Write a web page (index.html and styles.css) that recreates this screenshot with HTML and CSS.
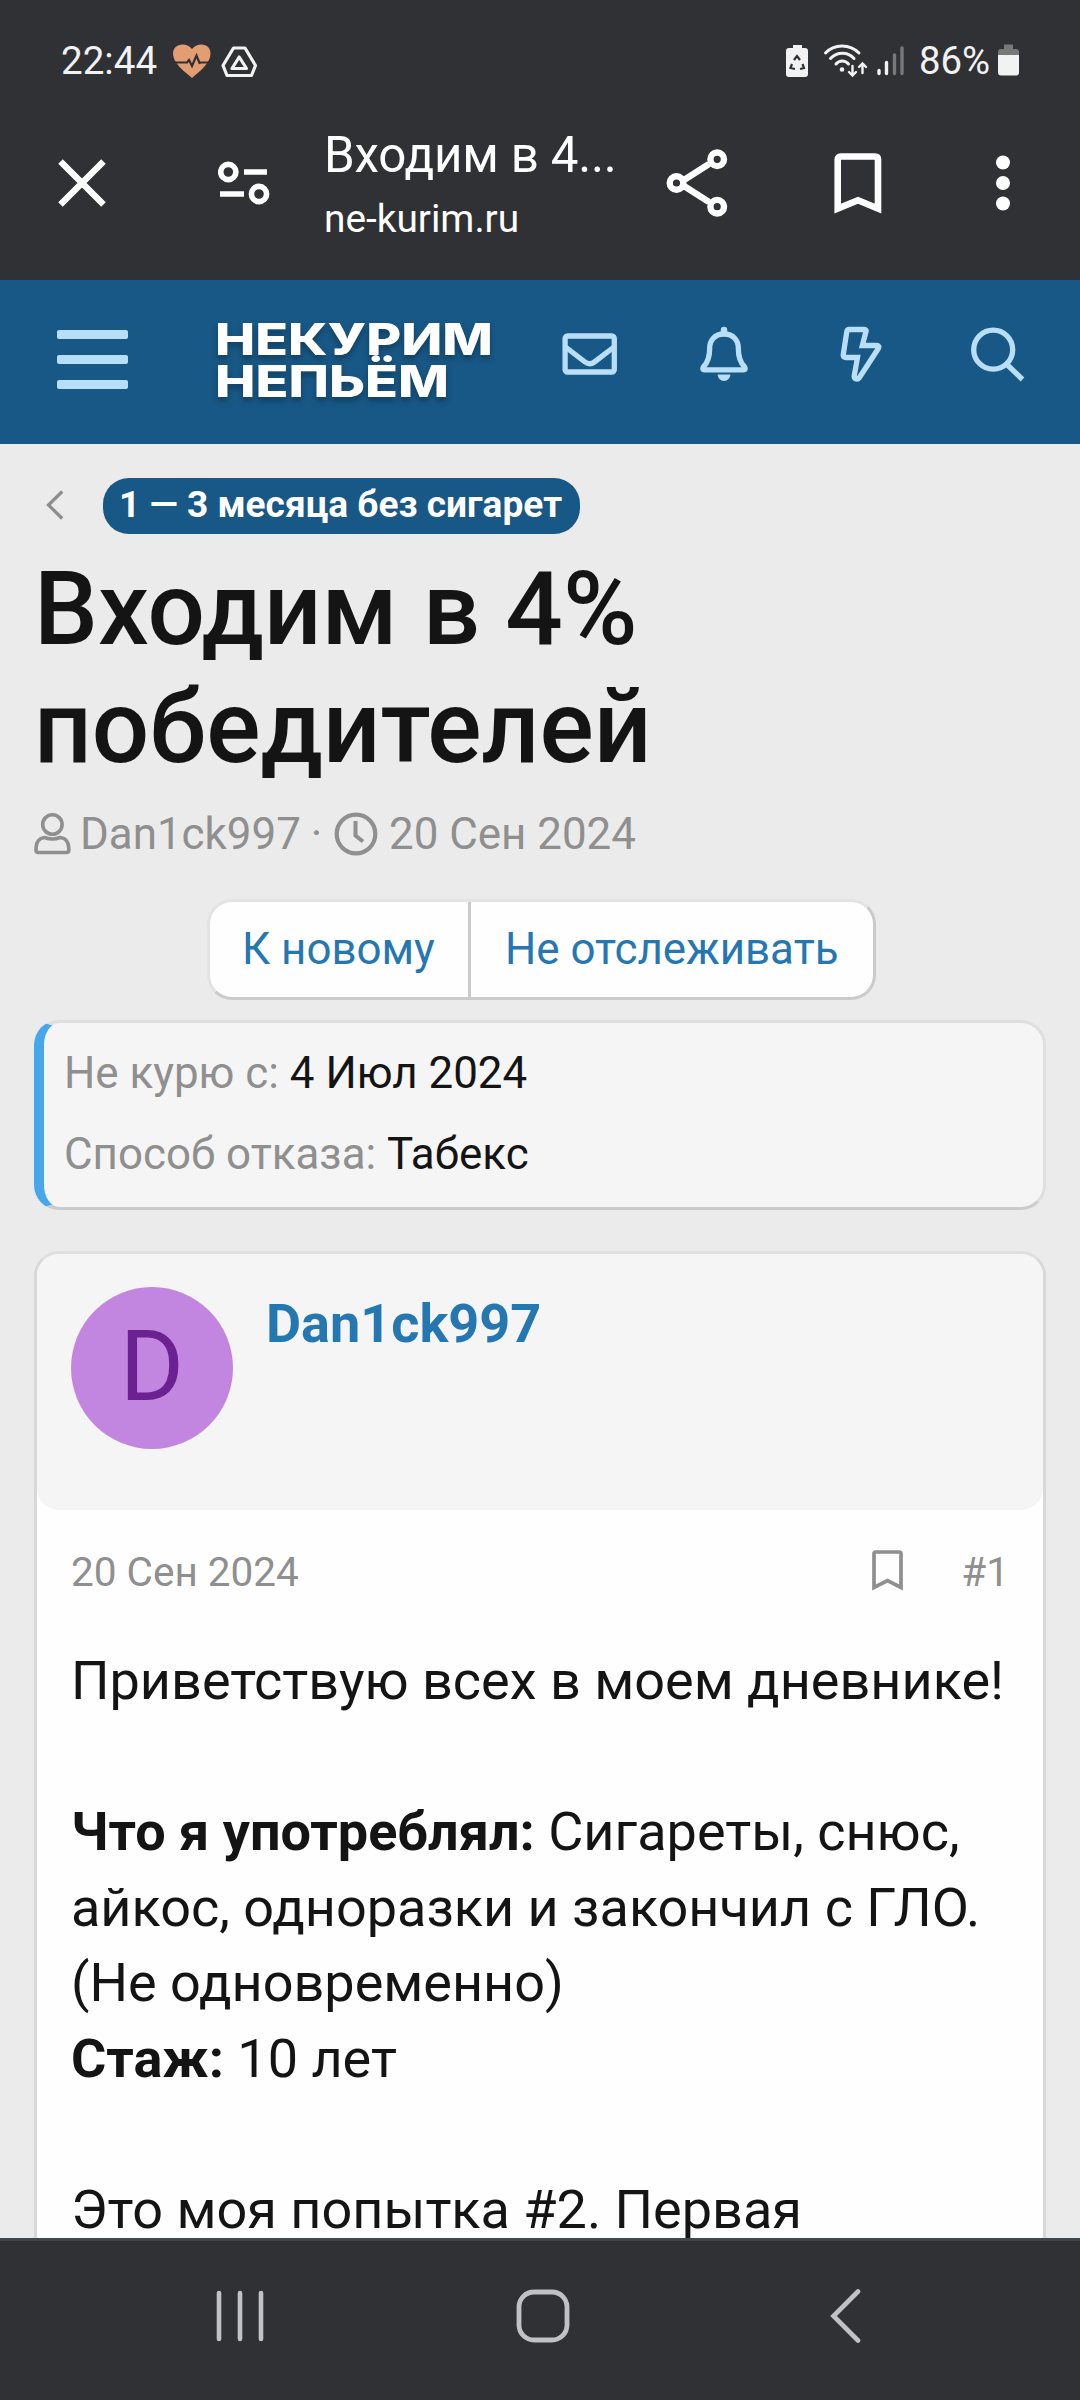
FILE: index.html
```html
<!DOCTYPE html>
<html lang="ru">
<head>
<meta charset="utf-8">
<title>Входим в 4% победителей</title>
<link rel="stylesheet" href="styles.css">
</head>
<body>
<div class="screen">
  <div class="status">
    <span class="time">22:44</span>
    <svg class="status-left" width="86" height="40" viewBox="0 0 86 40">
      <path d="M20 37C13 31 1 22 1 13C1 7 5 3.500 10.500 3.500C14.500 3.500 18 5.500 20 8C22 5.500 25.500 3.500 29.500 3.500C35 3.500 38.500 7 38.500 13C38.500 22 27 31 20 37Z" fill="#e29d73"/>
      <path d="M3 21.500H15L17 19L20 25L24.500 14.500L27.500 22L29 21.500H37" fill="none" stroke="#303134" stroke-width="2.200"/>
      <path d="M61.500 7H73L83.500 24.500L79.500 34.500H55L51 24.500Z" fill="none" stroke="#f2f2f2" stroke-width="3.200" stroke-linejoin="round"/>
      <path d="M67.200 16L74.500 27.500H60Z" fill="none" stroke="#f2f2f2" stroke-width="3.200" stroke-linejoin="round"/>
    </svg>
    <svg class="status-mid" width="126" height="40" viewBox="784 41 126 40">
      <path d="M793 45H802V48H805Q808 48 808 51V74Q808 77 805 77H789Q786 77 786 74V51Q786 48 789 48H793Z" fill="#f2f2f2"/>
      <path d="M794 60L797 56L800 60M802.500 64L804 68L800 69M795 69L790.500 68L792 64" fill="none" stroke="#303134" stroke-width="2.200"/>
      <g fill="none" stroke="#f2f2f2" stroke-width="3" stroke-linecap="round">
        <path d="M825.500 53C834 43.500 850 43.500 859 53"/>
        <path d="M830.500 58.500C837 51.500 848 51.500 854 58.500"/>
        <path d="M836 64C839.500 60 845 60 848.500 64"/>
        <path d="M852.500 66V75M849 72L852.500 75.500L856 72M862.500 73V63.500M859 67L862.500 63.500L866 67" stroke-width="2.400"/>
      </g>
      <circle cx="842" cy="69.500" r="2.300" fill="#f2f2f2"/>
      <g stroke-width="3.400" stroke-linecap="round">
        <path d="M879 70.500V73.500M886.500 62.500V73.500" stroke="#f2f2f2"/>
        <path d="M894.500 55V73.500M902 48V73.500" stroke="#77787a"/>
      </g>
    </svg>
    <span class="percent">86%</span>
    <svg class="battery" width="21" height="40" viewBox="0 0 21 40">
      <path d="M6 3.500H15V8H18Q21 8 21 11V15H0V11Q0 8 3 8H6Z" fill="#77787a"/>
      <path d="M0 14H21V31.500Q21 34.500 18 34.500H3Q0 34.500 0 31.500Z" fill="#f2f2f2"/>
    </svg>
  </div>

  <div class="toolbar">
    <svg width="48" height="48" viewBox="0 0 48 48"><path d="M2.500 2.500L45.500 45.500M45.500 2.500L2.500 45.500" stroke="#fff" stroke-width="6.400"/></svg>
    <svg width="52" height="44" viewBox="0 0 52 44"><g fill="none" stroke="#fff" stroke-width="5.600"><circle cx="10.300" cy="11" r="7.600"/><path d="M26 11H49M2 33H26"/><circle cx="41" cy="33" r="7.600"/></g></svg>
    <div class="page-info"><div class="page-title">Входим в 4...</div><div class="page-url">ne-kurim.ru</div></div>
    <svg width="62" height="68" viewBox="0 0 62 68"><g fill="none" stroke="#fff" stroke-width="6.400"><path d="M18 31L43 15M18 37L43 53"/><circle cx="10.500" cy="34" r="6.800"/><circle cx="51.200" cy="10.300" r="6.800"/><circle cx="51.200" cy="57.700" r="6.800"/></g></svg>
    <svg width="48" height="61" viewBox="0 0 48 61"><path d="M3.700 55.500V6.500Q3.700 3.500 6.700 3.500H41Q44 3.500 44 6.500V55.500L24 47.200Z" fill="none" stroke="#fff" stroke-width="6.600"/></svg>
    <svg width="16" height="56" viewBox="0 0 16 56"><g fill="#fff"><circle cx="8" cy="7.500" r="7"/><circle cx="8" cy="28" r="7"/><circle cx="8" cy="48.500" r="7"/></g></svg>
  </div>

  <header class="site-header">
    <div class="burger"><i></i><i></i><i></i></div>
    <svg class="logo" width="290" height="96" viewBox="0 0 290 96">
      <text x="-2" y="42.600" textLength="278" lengthAdjust="spacingAndGlyphs">НЕКУРИМ</text>
      <text x="-2" y="85" textLength="234" lengthAdjust="spacingAndGlyphs">НЕПЬЁМ</text>
    </svg>
    <svg width="56" height="56" viewBox="0 0 56 56"><g class="line"><rect x="3.100" y="10" width="49.200" height="36" rx="2.500"/><path d="M3.500 21L23 36Q27.700 39.500 32.400 36L52 21"/></g></svg>
    <svg width="48" height="56" viewBox="0 0 48 56"><g class="line"><path d="M24 8C14.500 8 9.700 14.500 9.700 22C9.700 32 7.500 37 3.300 41Q2 43.800 4.500 43.800H43.500Q46 43.800 44.700 41C40.500 37 38.300 32 38.300 22C38.300 14.500 33.500 8 24 8Z"/><path d="M24 7V4" stroke-width="6.500" stroke-linecap="round"/></g><path d="M17.500 48.500H30.500Q29.500 55 24 55Q18.500 55 17.500 48.500Z" fill="#b9def7"/></svg>
    <svg width="42" height="56" viewBox="0 0 42 56"><path class="line" d="M9 3.500H24.500Q26.500 3.500 26 5.500L22.300 19.500H36.500Q40 19.500 38.300 22.500L19.500 51.500Q17.500 54 15 52.500Q14 51.500 14.200 50L17.500 31.500H5.500Q2.800 31.500 3.300 28.500L6.800 5.500Q7.300 3.500 9 3.500Z"/></svg>
    <svg width="56" height="56" viewBox="0 0 56 56"><g class="line"><circle cx="23.200" cy="23.700" r="19.500"/><path d="M37.500 39L52.500 53.500"/></g></svg>
  </header>

  <main class="content">
    <nav class="crumbs">
      <svg width="18" height="30" viewBox="0 0 18 30"><path d="M16.200 1.500L2.500 15L16.200 28.500" fill="none" stroke="#8e8e8e" stroke-width="3.300"/></svg>
      <a class="pill">1 — 3 месяца без сигарет</a>
    </nav>
    <h1 class="heading">Входим в 4%<br>победителей</h1>
    <div class="meta">
      <svg width="37" height="44" viewBox="0 0 37 44"><g fill="none" stroke="#8f8f8f" stroke-width="3.600"><circle cx="18.400" cy="12.500" r="9.700"/><path d="M10.500 25.500Q2.300 26.500 2 36V38Q2 40.500 4.500 40.500H32.300Q34.800 40.500 34.800 38V36Q34.500 26.500 26.300 25.500Q18.400 28.500 10.500 25.500Z"/></g></svg>
      <span class="meta-user">Dan1ck997</span>
      <span class="meta-dot">·</span>
      <svg width="44" height="44" viewBox="0 0 44 44"><g fill="none" stroke="#8f8f8f" stroke-width="4.200"><circle cx="22" cy="22" r="19.300"/><path d="M21.500 9V23.500L29 29.500" stroke-width="4"/></g></svg>
      <span class="meta-date">20 Сен 2024</span>
    </div>
    <div class="buttons"><a class="btn btn-new">К новому</a><a class="btn btn-watch">Не отслеживать</a></div>
    <dl class="facts">
      <div><dt>Не курю с:</dt> <dd>4 Июл 2024</dd></div>
      <div><dt>Способ отказа:</dt> <dd>Табекс</dd></div>
    </dl>
    <article class="post">
      <div class="author"><div class="avatar">D</div><a class="author-name">Dan1ck997</a></div>
      <div class="post-bar">
        <span class="post-date">20 Сен 2024</span>
        <svg width="31" height="42" viewBox="0 0 31 42"><path d="M2 37.500V3.800Q2 2 3.800 2H27.200Q29 2 29 3.800V37.500L15.500 30.500Z" fill="none" stroke="#8f8f8f" stroke-width="3.700"/></svg>
        <span class="post-number">#1</span>
      </div>
      <div class="post-body">Приветствую всех в моем дневнике!<br><br><b>Что я употреблял:</b> Сигареты, снюс,<br>айкос, одноразки и закончил с ГЛО.<br>(Не одновременно)<br><b>Стаж:</b> 10 лет<br><br>Это моя попытка #2. Первая</div>
    </article>
  </main>

  <footer class="navbar">
    <svg width="48" height="54" viewBox="0 0 48 54"><path d="M3 4V50M24 4V50M45 4V50" stroke="#c1c2c5" stroke-width="4.600" stroke-linecap="round"/></svg>
    <svg class="home" width="54" height="54" viewBox="0 0 54 54"><rect x="3" y="3" width="48" height="48" rx="15" fill="none" stroke="#c1c2c5" stroke-width="4.800"/></svg>
    <svg width="31" height="54" viewBox="0 0 31 54"><path d="M28 2.500L3.500 27L28 51.500" fill="none" stroke="#c1c2c5" stroke-width="4.600" stroke-linecap="round"/></svg>
  </footer>
</div>
</body>
</html>
```

FILE: styles.css
```css
* { box-sizing: border-box; }
body { margin: 0; font-family: Roboto, "Liberation Sans", sans-serif; color: #141414; }
svg { display: block; flex: none; }
.screen { width: 1080px; height: 2400px; display: flex; flex-direction: column; overflow: hidden; background: #ebebeb; white-space: nowrap; }

.status { height: 120px; flex: none; padding: 41px 61px 0 61px; display: flex; align-items: flex-start; background: #303134; color: #f2f2f2; font-size: 38.6px; line-height: 40px; }
.time { width: 110.5px; }
.status-mid { margin-left: auto; }
.percent { width: 79px; margin-left: 9px; font-size: 38.3px; }

.toolbar { height: 160px; flex: none; padding-bottom: 35px; display: grid; grid-template-columns: 163px 161px 292px 161px 161px 129px; align-items: center; justify-items: center; background: #303134; color: #fff; }
.page-info { align-self: start; justify-self: start; padding: 4px 0 0 0; }
.page-title { font-size: 49.3px; line-height: 62px; letter-spacing: -0.2px; }
.page-url { margin-top: 6px; font-size: 38.8px; line-height: 54px; }

.site-header { height: 164px; flex: none; padding-bottom: 16px; display: grid; grid-template-columns: 185px 337px 135px 134px 140px 134px; align-items: center; justify-items: center; background: #185886; }
.burger { width: 71px; margin-top: 11px; display: flex; flex-direction: column; gap: 16px; }
.burger i { height: 9px; border-radius: 2px; background: #b9def7; }
.logo { justify-self: start; margin: 12px 0 0 32px; overflow: visible; font-family: Inter, sans-serif; font-weight: 800; font-size: 43.5px; fill: #fff; filter: drop-shadow(0 4px 3px rgba(0, 0, 0, .3)); }
.line { fill: none; stroke: #b9def7; stroke-width: 5.3px; }

.content { flex: 1; min-height: 0; overflow: hidden; padding: 34px 34px 0; }
.crumbs { display: flex; align-items: center; padding-left: 12px; }
.crumbs svg { margin-bottom: 3px; }
.pill { width: 477px; height: 56px; margin-left: 39px; padding-left: 16px; border-radius: 26px; background: #185886; color: #fff; font-weight: 700; font-size: 37.1px; line-height: 53px; }
.heading { margin: 16px 0 0; font-weight: 500; font-size: 101.25px; line-height: 118px; padding-top: 1px; height: 236px; }
.meta { height: 56px; margin-top: 20px; display: flex; align-items: center; color: #8f8f8f; font-size: 43.9px; line-height: 56px; }
.meta-user { width: 219px; margin-left: 9px; }
.meta-dot { width: 35px; text-align: center; }
.meta-date { margin-left: 11px; }
.buttons { width: 669px; height: 101px; margin: 37px 0 0 173px; display: flex; border: 3px solid; border-color: #e3e3e3 #cbcbcb #cbcbcb #e3e3e3; border-radius: 25px; overflow: hidden; background: #fefefe; }
.btn { color: #2577b1; font-size: 43.9px; line-height: 94px; }
.btn-new { width: 261px; padding-left: 32px; border-right: 3px solid #cbcbcb; }
.btn-watch { padding-left: 34px; }
.facts { height: 190px; margin: 20px 0 0; padding: 10px 20px; border: 3px solid #dfdfdf; border-bottom-color: #cbcbcb; border-left: 10px solid #47a7eb; border-radius: 25px; background: #f5f5f5; font-size: 43.9px; line-height: 81px; }
.facts dt, .facts dd { display: inline; margin: 0; }
.facts dt { color: #8f8f8f; }
.post { height: 1200px; margin-top: 41px; border: 3px solid #d8d8d8; border-top-color: #dfdfdf; border-radius: 25px; background: #fefefe; }
.author { height: 256px; display: flex; padding: 33px 34px; border-radius: 22px; background: #f5f5f5; }
.avatar { width: 162px; height: 162px; flex: none; border-radius: 50%; background: #c285e0; color: #6b218f; font-size: 98px; line-height: 160px; text-align: center; }
.author-name { margin: 5px 0 0 33px; color: #2577b1; font-weight: 700; font-size: 54px; line-height: 63px; }
.post-bar { display: flex; align-items: center; margin: 37px 34px 0 34px; height: 50px; color: #8f8f8f; font-size: 40.5px; line-height: 50px; }
.post-bar svg { margin: 0 58px 2px auto; }
.post-body { padding: 46px 34px 0; font-size: 54px; line-height: 75.6px; }

.navbar { height: 162px; flex: none; padding: 0 219px 0 216px; border-top: 3px solid #40474b; display: flex; justify-content: space-between; align-items: flex-start; background: #303134; }
.navbar svg { margin-top: 48px; }
.navbar .home { margin-right: 9px; }
```
